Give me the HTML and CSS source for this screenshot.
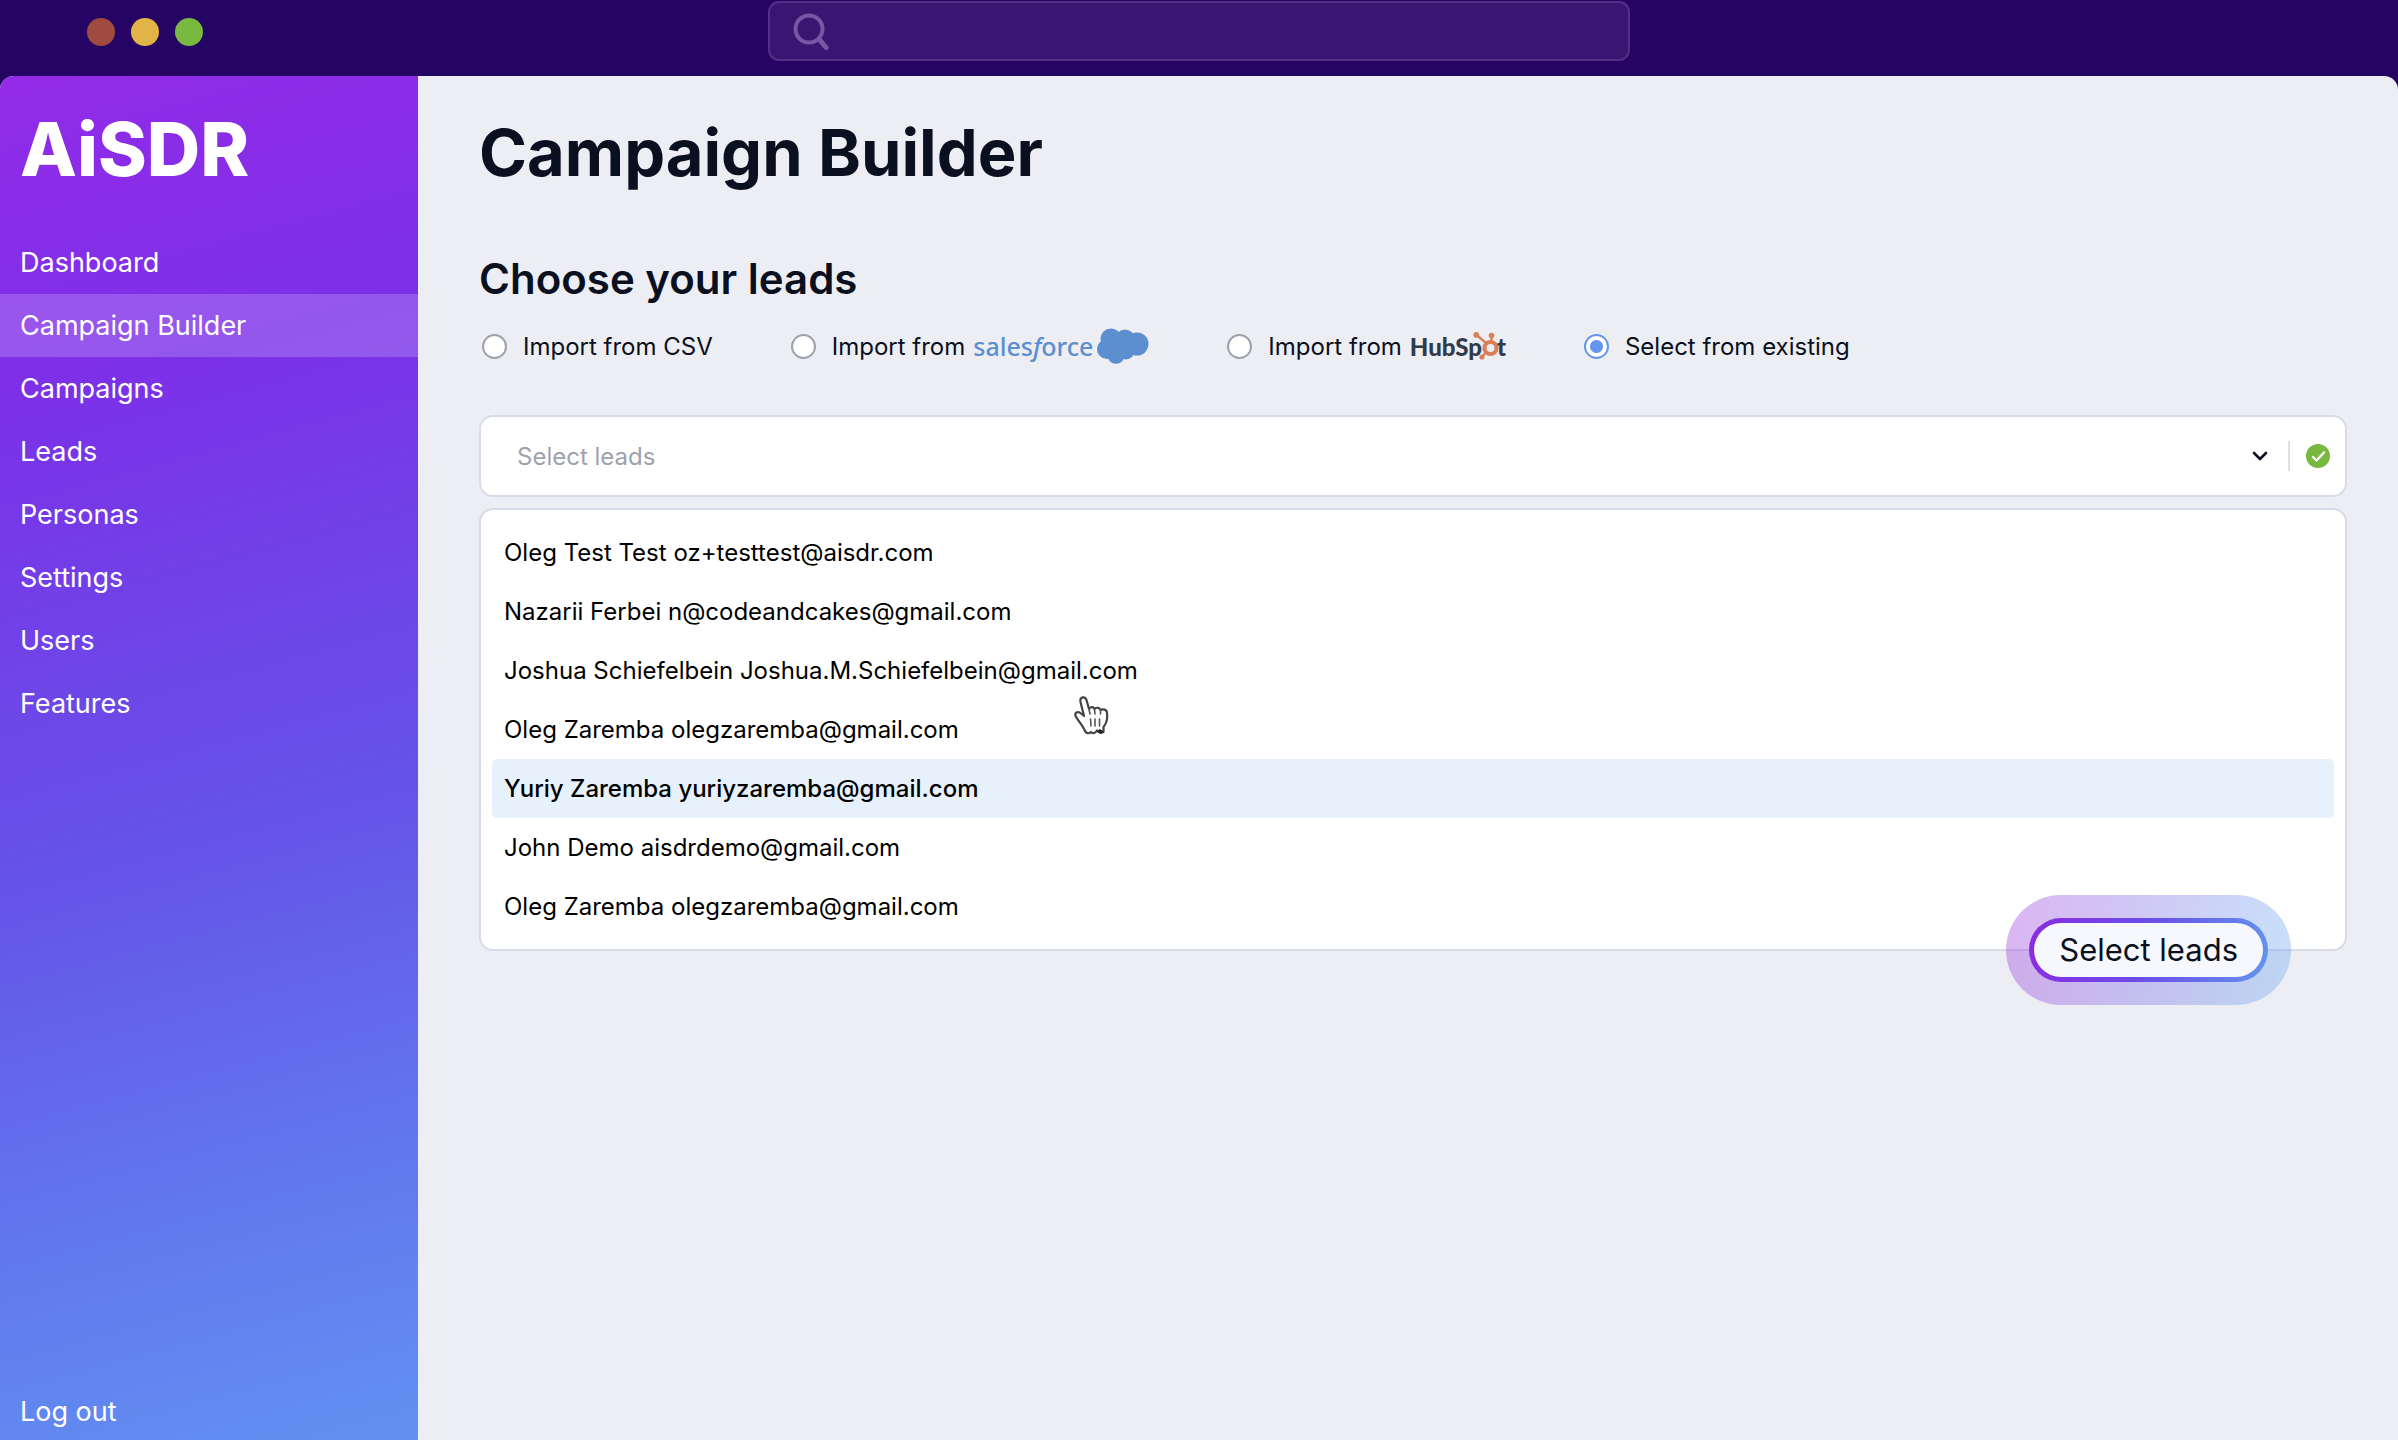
FILE: index.html
```
<!DOCTYPE html>
<html lang="en">

<head>
    <title>AiSDR - Campaign Builder</title>
    <meta charset="UTF-8">
    <meta name="viewport" content="width=device-width, initial-scale=1.0">
    <link rel="stylesheet" href="styles.css">
</head>

<body>
    <header class="topbar">
        <div class="dots">
            <span class="dot red"></span>
            <span class="dot yellow"></span>
            <span class="dot green"></span>
        </div>
        <label class="search">
            <svg width="36" height="40" viewBox="0 0 36 40" fill="none" stroke="#7656a5">
                <circle cx="16" cy="18" r="13.5" stroke-width="4"/>
                <path d="M26 28 L33 36.5" stroke-width="5" stroke-linecap="round"/>
            </svg>
            <input type="text" aria-label="Search">
        </label>
    </header>

    <div class="layout">
        <aside class="sidebar">
            <a class="logo" href="#">AiSDR</a>
            <nav class="nav">
                <a href="#">Dashboard</a>
                <a href="#" class="active">Campaign Builder</a>
                <a href="#">Campaigns</a>
                <a href="#">Leads</a>
                <a href="#">Personas</a>
                <a href="#">Settings</a>
                <a href="#">Users</a>
                <a href="#">Features</a>
            </nav>
            <a class="logout" href="#">Log out</a>
        </aside>

        <main class="content">
            <h1>Campaign Builder</h1>
            <h2>Choose your leads</h2>

            <div class="sources">
                <label><input type="radio" name="source">Import from CSV</label>
                <label>
                    <input type="radio" name="source">Import from
                    <span class="salesforce">sales<i>f</i>orce
                        <svg width="52" height="36" viewBox="0 0 52 36" fill="#5b8fcf">
                            <circle cx="14" cy="11" r="10.5"/>
                            <circle cx="28" cy="11" r="9.5"/>
                            <circle cx="40" cy="16" r="11.5"/>
                            <circle cx="10" cy="21" r="10"/>
                            <circle cx="19" cy="27" r="8.8"/>
                            <circle cx="29" cy="23" r="8.5"/>
                            <circle cx="22" cy="17" r="11"/>
                        </svg>
                    </span>
                </label>
                <label>
                    <input type="radio" name="source">Import from
                    <span class="hubspot">HubSp<svg width="26" height="28" viewBox="0 0 26 28" fill="none" stroke="#d98059">
                            <circle cx="17.500" cy="16" r="6" stroke-width="4.200"/>
                            <path d="M3.500 3 L13 11 M18.500 3 V9 M13.500 20 L9 24.500" stroke-width="2.400"/>
                            <g fill="#d98059" stroke="none">
                                <circle cx="3.300" cy="2.900" r="2.900"/>
                                <circle cx="18.500" cy="3.600" r="2.800"/>
                                <circle cx="9" cy="25" r="2.600"/>
                            </g>
                        </svg>t</span>
                </label>
                <label><input type="radio" name="source" checked>Select from existing</label>
            </div>

            <div class="select">
                <input type="text" placeholder="Select leads" aria-label="Select leads">
                <button type="button" class="toggle" aria-label="Toggle list">
                    <svg width="16" height="10" viewBox="0 0 16 10" fill="none" stroke="#0a1020" stroke-width="2.600" stroke-linecap="round" stroke-linejoin="round">
                        <path d="M2 2 L8 8 L14 2"/>
                    </svg>
                </button>
                <span class="divider"></span>
                <svg width="24" height="24" viewBox="0 0 24 24">
                    <circle cx="12" cy="12" r="12" fill="#79b83f"/>
                    <path d="M7 13 L10.500 16.500 L18 8.500" fill="none" stroke="#fff" stroke-width="2.400" stroke-linecap="round" stroke-linejoin="round"/>
                </svg>
            </div>

            <div class="dropdown">
                <ul role="listbox" aria-label="Leads">
                    <li role="option">Oleg Test Test oz+testtest@aisdr.com</li>
                    <li role="option">Nazarii Ferbei n@codeandcakes@gmail.com</li>
                    <li role="option">Joshua Schiefelbein Joshua.M.Schiefelbein@gmail.com</li>
                    <li role="option">Oleg Zaremba olegzaremba@gmail.com</li>
                    <li role="option" class="selected" aria-selected="true">Yuriy Zaremba yuriyzaremba@gmail.com</li>
                    <li role="option">John Demo aisdrdemo@gmail.com</li>
                    <li role="option">Oleg Zaremba olegzaremba@gmail.com</li>
                </ul>
                <svg class="cursor" width="38" height="42" viewBox="0 0 38 42">
                    <path d="M12 36 C10 31 6 27 2.500 21 C1.500 17 5.500 16 8 18.500 L11 21 L7.500 7 C6.500 1.500 12 1 13.500 5 L16 14 C17 11.500 21 11.500 21.500 14 C23 12 27 12.500 27.500 15 C30 13.500 34 14.500 34 18 C35 25 33 29 30.500 32 V37 C27 39 25 37 24 35.500 C22 39 19 38.500 18 37 C16 39 13 38.500 12 36 Z" fill="#fff" stroke="#444" stroke-width="2.200" stroke-linejoin="round"/>
                    <path d="M16 14 L17 19 M21.500 14 L22 19 M27.500 15 V19 M17.500 24 L18 31 M22 24 V31 M26.500 24 V31" fill="none" stroke="#555" stroke-width="1.600" stroke-linecap="round"/>
                    <path d="M24 36 L27 34 L30 36 V38 H26 Z" fill="#222"/>
                </svg>
                <div class="glow">
                    <button type="button">Select leads</button>
                </div>
            </div>
        </main>
    </div>
</body>

</html>
```

FILE: styles.css
```
* {
    box-sizing: border-box;
    margin: 0;
    padding: 0;
}

body {
    display: flex;
    flex-direction: column;
    min-height: 100vh;
    font-family: Inter, "Open Sans", sans-serif;
    font-size: 24px;
    color: #0a1020;
    background-color: #250463;
}

a {
    color: #fff;
    text-decoration: none;
}

input,
button {
    font: inherit;
    color: inherit;
    border: 0;
    background: none;
    outline: none;
}

/* top bar */
.topbar {
    display: grid;
    grid-template-columns: 1fr 36% 1fr;
    align-items: start;
    height: 76px;
    padding-top: 1px;
}

.dots {
    display: flex;
    gap: 16px;
    padding: 17px 0 0 87px;
}

.dot {
    width: 28px;
    height: 28px;
    border-radius: 50%;
}

.red {
    background-color: #a04b3f;
}

.yellow {
    background-color: #e2b447;
}

.green {
    background-color: #79b940;
}

.search {
    display: flex;
    align-items: center;
    height: 60px;
    margin: 0 1px;
    padding: 0 23px;
    border: 2px solid #533083;
    border-radius: 11px;
    background-color: #3a1672;
}

.search input {
    flex: 1;
    color: #fff;
}

.layout {
    flex: 1;
    display: flex;
    border-radius: 14px 14px 0 0;
    overflow: hidden;
    background-color: #edeef4;
}

/* sidebar */
.sidebar {
    display: flex;
    flex-direction: column;
    width: 418px;
    background: linear-gradient(165deg, #932be8 0%, #7c30e8 22%, #6553e8 55%, #6178ee 80%, #6391f0 100%);
}

.logo {
    padding: 22px 20px 31px;
    font-size: 74px;
    line-height: 102px;
    font-weight: 800;
}

.nav a,
.logout {
    display: block;
    padding: 0 20px;
    font-size: 27px;
    line-height: 63px;
}

.nav .active {
    background-color: rgba(255, 255, 255, .19);
}

.logout {
    margin-top: auto;
    line-height: 56px;
}

/* content */
.content {
    flex: 1;
    padding: 32px 51px 0 61px;
}

h1 {
    font-size: 65px;
    line-height: 90px;
    font-weight: 700;
}

h2 {
    margin-top: 51px;
    font-size: 42px;
    line-height: 60px;
    font-weight: 600;
}

.sources {
    display: flex;
    gap: 78px;
    margin-top: 17px;
    padding-left: 3px;
}

.sources label {
    display: flex;
    align-items: center;
    height: 40px;
    white-space: nowrap;
}

.sources input {
    appearance: none;
    width: 25px;
    height: 25px;
    margin-right: 16px;
    border: 2px solid #9da1ab;
    border-radius: 50%;
    background-color: #fff;
}

.sources input:checked {
    border-color: #6596ec;
    background: radial-gradient(circle, #6596ec 6px, #fff 7px);
}

.salesforce {
    display: flex;
    align-items: center;
    margin-left: 8px;
    font-family: "Noto Sans", sans-serif;
    font-size: 25px;
    font-weight: 500;
    color: #5b8fcf;
}

.salesforce svg {
    margin-left: 4px;
}

.hubspot {
    display: flex;
    align-items: center;
    margin-left: 8px;
    font-family: Lato, sans-serif;
    font-weight: 900;
    color: #303c4c;
}

.hubspot svg {
    margin: 0 -2px 0 -9px;
}

.select {
    display: flex;
    align-items: center;
    height: 82px;
    margin-top: 49px;
    padding: 0 15px 0 36px;
    border: 2px solid #d8dbe8;
    border-radius: 14px;
    background-color: #fff;
}

.select input {
    flex: 1;
}

.select input::placeholder {
    color: #9ea2ad;
    opacity: 1;
}

.toggle {
    display: flex;
    padding: 20px;
}

.divider {
    width: 2px;
    height: 30px;
    margin-right: 16px;
    background-color: #dcdfe8;
}

.dropdown {
    position: relative;
    margin-top: 11px;
    padding: 13px 11px;
    border: 2px solid #d8dbe8;
    border-radius: 14px;
    background-color: #fff;
}

.dropdown li {
    list-style: none;
    padding: 0 12px;
    line-height: 59px;
    border-radius: 5px;
    color: #000;
}

.dropdown .selected {
    font-weight: 500;
    background-color: #e7f1fc;
}

/* pointer and button lie over the list */
.cursor {
    position: absolute;
    top: 185px;
    left: 592px;
}

.glow {
    position: absolute;
    right: 54px;
    bottom: -56px;
    padding: 23px;
    border-radius: 56px;
    background: linear-gradient(100deg, rgba(160, 60, 220, .38), rgba(130, 110, 230, .38) 45%, rgba(110, 175, 240, .38));
}

.glow button {
    display: block;
    padding: 0 25px;
    border: 5px solid transparent;
    border-radius: 32px;
    font-size: 31px;
    line-height: 54px;
    background: linear-gradient(#f7f8fd, #f7f8fd) padding-box, linear-gradient(100deg, #8a2be2, #6a4fe8 50%, #6495ed) border-box;
}
```
